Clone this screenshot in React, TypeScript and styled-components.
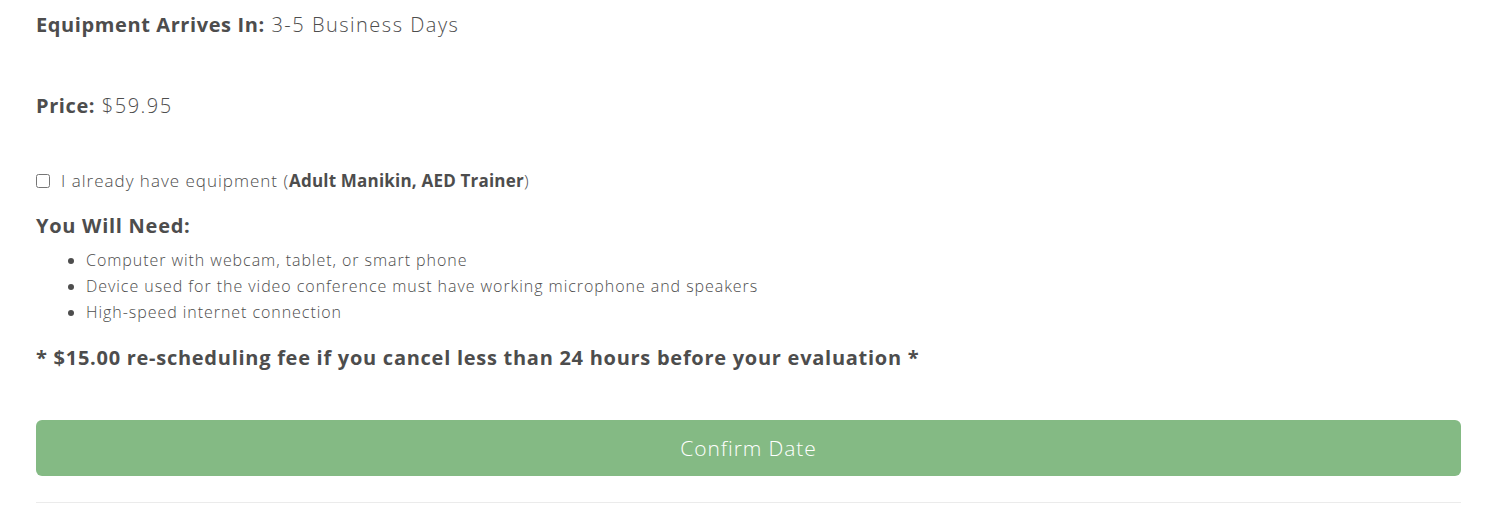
import { FC } from 'react';
import styled, { createGlobalStyle } from 'styled-components';

const GlobalStyle = createGlobalStyle`
  body {
    margin: 0;
    background: #fff;
    font-family: 'Open Sans', Lato, sans-serif;
    color: #4d4d4d;
  }
`;

const SContainer = styled.div`
  padding: 0 44px 0 36px;
  display: flex;
  flex-direction: column;
`;
const SInfoLine = styled.p<{ $top: number }>`
  margin: ${({ $top }) => $top}px 0 0;
  font-size: 20px;
  line-height: 30px;
  font-weight: 300;
  letter-spacing: 1.5px;

  strong {
    font-weight: 700;
    letter-spacing: 0.6px;
  }
`;
const SCheckRow = styled.label`
  margin-top: 48px;
  display: flex;
  align-items: center;
  gap: 11px;
  font-size: 17px;
  line-height: 24px;
  font-weight: 300;
  letter-spacing: 1px;
  cursor: pointer;

  input {
    margin: 0;
    width: 14px;
    height: 14px;
  }
  strong {
    font-weight: 700;
    letter-spacing: 0.2px;
  }
`;
const SHeading = styled.h3<{ $top: number }>`
  margin: ${({ $top }) => $top}px 0 0;
  font-size: 20px;
  line-height: 28px;
  font-weight: 700;
  letter-spacing: 0.73px;
`;
const SList = styled.ul`
  margin: 7px 0 0;
  padding-left: 50px;
  font-size: 16px;
  line-height: 26px;
  font-weight: 300;
  letter-spacing: 0.95px;
`;
const SButton = styled.button`
  margin-top: 48px;
  height: 56px;
  width: 100%;
  border: none;
  border-radius: 6px;
  background: #84ba84;
  color: #fff;
  font-family: 'Open Sans', sans-serif;
  font-size: 21px;
  font-weight: 300;
  letter-spacing: 0.9px;
  cursor: pointer;
`;
const SDivider = styled.hr`
  margin: 26px 0 0;
  border: none;
  border-top: 1px solid #ebebeb;
`;

const needs = [
  'Computer with webcam, tablet, or smart phone',
  'Device used for the video conference must have working microphone and speakers',
  'High-speed internet connection',
];

const App: FC = () => (
  <>
    <GlobalStyle />
    <SContainer>
      <SInfoLine $top={10}>
        <strong>Equipment Arrives In:</strong> 3-5 Business Days
      </SInfoLine>
      <SInfoLine $top={51}>
        <strong>Price:</strong> $59.95
      </SInfoLine>
      <SCheckRow>
        <input type="checkbox" />
        <span>
          I already have equipment (<strong>Adult Manikin, AED Trainer</strong>)
        </span>
      </SCheckRow>
      <SHeading $top={19}>You Will Need:</SHeading>
      <SList>
        {needs.map((item) => (
          <li key={item}>{item}</li>
        ))}
      </SList>
      <SHeading $top={19}>
        * $15.00 re-scheduling fee if you cancel less than 24 hours before your
        evaluation *
      </SHeading>
      <SButton>Confirm Date</SButton>
      <SDivider />
    </SContainer>
  </>
);

export default App;
